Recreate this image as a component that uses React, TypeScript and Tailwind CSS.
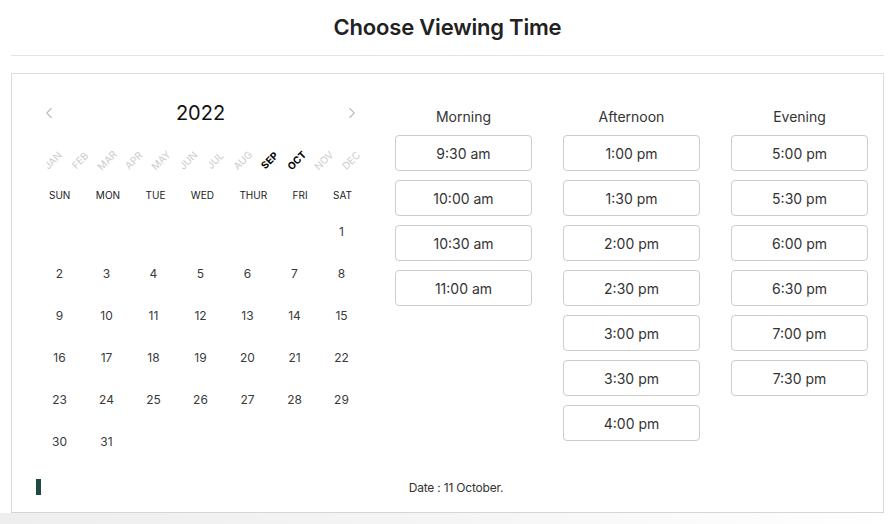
import { ChevronLeft, ChevronRight } from "lucide-react";

const MONTHS = ["JAN", "FEB", "MAR", "APR", "MAY", "JUN", "JUL", "AUG", "SEP", "OCT", "NOV", "DEC"];
const WEEKDAYS = ["SUN", "MON", "TUE", "WED", "THUR", "FRI", "SAT"];

const SLOTS = [
  { title: "Morning", times: ["9:30 am", "10:00 am", "10:30 am", "11:00 am"] },
  {
    title: "Afternoon",
    times: ["1:00 pm", "1:30 pm", "2:00 pm", "2:30 pm", "3:00 pm", "3:30 pm", "4:00 pm"],
  },
  { title: "Evening", times: ["5:00 pm", "5:30 pm", "6:00 pm", "6:30 pm", "7:00 pm", "7:30 pm"] },
];

// October 2022 starts on a Saturday
const cells: (number | null)[] = [
  ...Array(6).fill(null),
  ...Array.from({ length: 31 }, (_, i) => i + 1),
];

export default function App() {
  return (
    <div className="w-[895px] h-[524px] overflow-hidden bg-white font-['Inter','Noto_Sans',sans-serif] text-[#222]">
      {/* header */}
      <div className="mx-[11px] h-[56px] border-b border-[#e3e3e3] flex items-center justify-center">
        <h1 className="text-[22px] font-semibold tracking-[-0.2px] text-[#222]">Choose Viewing Time</h1>
      </div>

      {/* main box */}
      <div className="mx-[11px] mt-[17px] border border-[#dcdcdc] border-b-[#cfd8dc] pt-[25px] pb-[15px] px-[24px]">
        <div className="flex">
          {/* calendar */}
          <div className="w-[329px] shrink-0">
            <div className="h-[28px] flex items-center justify-between px-[4px]">
              <ChevronLeft size={18} strokeWidth={1.5} className="text-[#bdbdbd]" />
              <span className="text-[20px] text-[#111]">2022</span>
              <ChevronRight size={18} strokeWidth={1.5} className="text-[#bdbdbd]" />
            </div>

            <div className="mt-[15px] h-[36px] grid grid-cols-12 pl-[3px]">
              {MONTHS.map((m) => {
                const active = m === "SEP" || m === "OCT";
                return (
                  <div key={m} className="flex items-center justify-center">
                    <span
                      className={`-rotate-45 text-[10px] ${
                        active ? "font-bold text-black" : "text-[#cccccc]"
                      }`}
                    >
                      {m}
                    </span>
                  </div>
                );
              })}
            </div>

            <div className="mt-[7px] h-[20px] flex items-center justify-between px-[13px] text-[10px] text-[#222]">
              {WEEKDAYS.map((d) => (
                <span key={d}>{d}</span>
              ))}
            </div>

            <div className="mt-[6px] grid grid-cols-7">
              {cells.map((d, i) => (
                <div key={i} className="h-[42px] flex items-center justify-center text-[12px] text-[#3a3a3a]">
                  {d ?? ""}
                </div>
              ))}
            </div>
          </div>

          {/* time slots */}
          <div className="ml-[30px] pt-[7px] flex gap-[31px]">
            {SLOTS.map((col) => (
              <div key={col.title} className="w-[137px] flex flex-col">
                <div className="h-[20px] mb-[9px] flex items-center justify-center text-[14px] text-[#333]">
                  {col.title}
                </div>
                <div className="flex flex-col gap-[9px]">
                  {col.times.map((t) => (
                    <button
                      key={t}
                      className="h-[36px] w-full rounded-[4px] border border-[#cccccc] bg-white text-[14px] text-[#333]"
                    >
                      {t}
                    </button>
                  ))}
                </div>
              </div>
            ))}
          </div>
        </div>

        {/* footer */}
        <div className="mt-[14px] h-[20px] flex items-center">
          <div className="w-[5px] h-[16px] bg-[#1e4a45]" />
          <div className="flex-1 text-center text-[12px] tracking-[-0.2px] text-[#333] pt-[2px] pl-[12px]">
            Date : 11 October.
          </div>
        </div>
      </div>

      <div className="h-[12px] bg-linear-to-r from-[#eeeeee] via-[#f5f5f5] to-white" />
    </div>
  );
}
